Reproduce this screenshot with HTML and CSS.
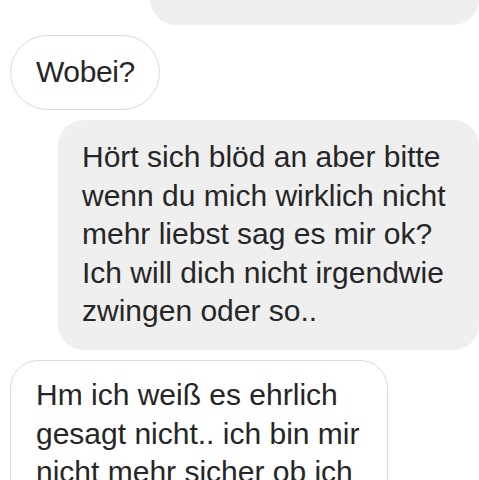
FILE: index.html
```html
<!DOCTYPE html>
<html lang="de">
<head>
<meta charset="utf-8">
<title>Chat</title>
<link rel="stylesheet" href="styles.css">
</head>
<body>
<div class="chat">
  <div class="bubble sent prev"></div>
  <div class="bubble received short">Wobei?</div>
  <div class="bubble sent long">Hört sich blöd an aber bitte<br>wenn du mich wirklich nicht<br>mehr liebst sag es mir ok?<br>Ich will dich nicht irgendwie<br>zwingen oder so..</div>
  <div class="bubble received reply">Hm ich weiß es ehrlich<br>gesagt nicht.. ich bin mir<br>nicht mehr sicher ob ich</div>
</div>
</body>
</html>
```
FILE: styles.css
```css
* { box-sizing: border-box; }
html, body {
  margin: 0;
  padding: 0;
  background: #ffffff;
  overflow: hidden;
  height: 480px;
}
.chat {
  display: flex;
  flex-direction: column;
  gap: 10px;
  padding: 0 0 0 10px;
  font-family: "Liberation Sans", Arial, sans-serif;
  font-size: 30px;
  line-height: 38.5px;
  color: #262626;
}
.bubble {
  white-space: nowrap;
}
.sent {
  align-self: flex-end;
  background: #efefef;
}
.received {
  align-self: flex-start;
  background: #ffffff;
  border: 1px solid #dbdbdb;
}
.prev {
  width: 329px;
  height: 62px;
  margin-top: -37px;
  border-radius: 26px;
}
.short {
  width: 150px;
  height: 75px;
  border-radius: 38px;
  padding: 17px 0 0 25px;
  letter-spacing: -0.4px;
}
.long {
  width: 421px;
  height: 230px;
  border-radius: 26px;
  padding: 18px 0 0 24px;
}
.reply {
  width: 378px;
  height: 160px;
  border-radius: 28px;
  padding: 15px 0 0 25px;
}
```
